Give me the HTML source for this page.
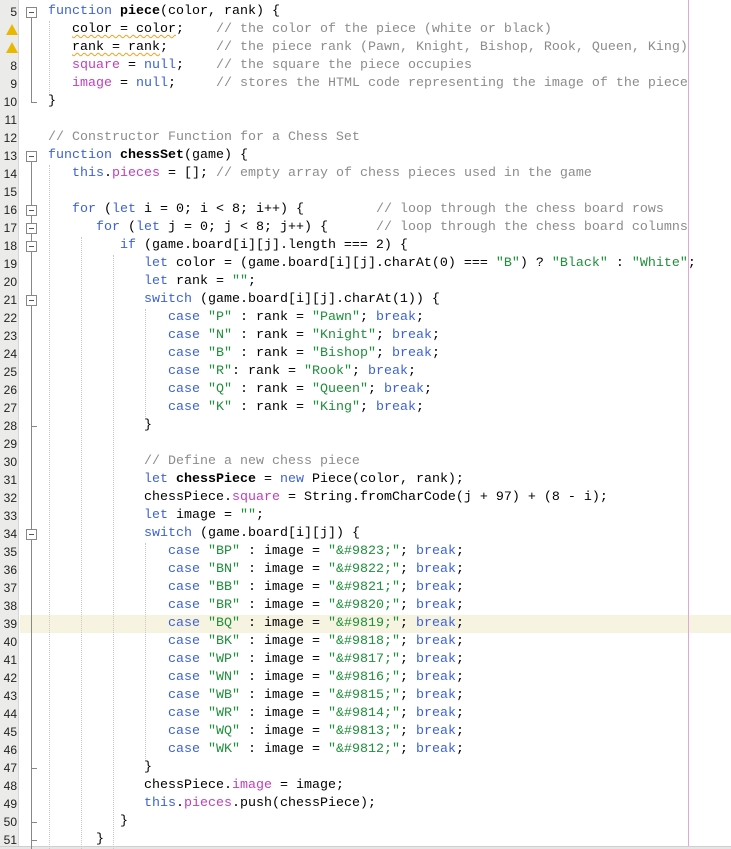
<!DOCTYPE html>
<html><head><meta charset="utf-8"><style>
*{margin:0;padding:0;box-sizing:border-box}
body{width:731px;height:849px;background:#fff;position:relative;overflow:hidden;font-family:"Liberation Mono",monospace;font-size:13.33px}
#gut{position:absolute;left:0;top:0;width:19px;height:849px;background:#ebebea;border-right:1px solid #d6d6d6}
.ln{position:absolute;left:0;width:17px;text-align:right;color:#222;font-family:"Liberation Sans",sans-serif;font-size:12px;height:18px;line-height:18px}
.cl{position:absolute;left:48px;height:18px;line-height:18px;white-space:pre;color:#000}
.k{color:#3d62d8}.s{color:#1f8f3a}.c{color:#8c8c8c}.p{color:#c03fc0}.b{font-weight:bold}
.w{text-decoration:underline wavy #f0a020;text-decoration-thickness:1px;text-underline-offset:2px}
.fb{position:absolute;left:26px;width:11px;height:11px;border:1px solid #888;background:#fff}
.fb:after{content:"";position:absolute;left:2px;top:4px;width:5px;height:1px;background:#555}
.fv{position:absolute;left:31px;width:1px;background:#888}
.fe{position:absolute;left:31px;width:6px;height:1px;background:#888}
.g{position:absolute;width:0;border-left:1px dotted #c8c8c8}
.warn{position:absolute;left:6px;width:0;height:0;border-left:6px solid transparent;border-right:6px solid transparent;border-bottom:11px solid #e8b800}
</style></head><body>
<div style="position:absolute;left:20px;top:615px;width:711px;height:18px;background:#f6f3e1"></div>
<div style="position:absolute;left:688px;top:0;width:1px;height:849px;background:#e0a8d8"></div>
<div id="gut"></div>
<div style="position:absolute;left:0;top:846px;width:731px;height:3px;background:#e6e6e6;border-top:1px solid #cfcfcf"></div>

<div class="g" style="left:49px;top:21px;height:72px"></div>
<div class="g" style="left:49px;top:165px;height:684px"></div>
<div class="g" style="left:81px;top:237px;height:612px"></div>
<div class="g" style="left:113px;top:255px;height:594px"></div>
<div class="g" style="left:145px;top:309px;height:108px"></div>
<div class="g" style="left:145px;top:543px;height:216px"></div>

<div class="fv" style="top:12px;height:90px"></div><div class="fe" style="top:102px"></div>
<div class="fv" style="top:156px;height:693px"></div>
<div class="fe" style="top:426px"></div><div class="fe" style="top:768px"></div><div class="fe" style="top:822px"></div><div class="fe" style="top:840px"></div>
<div class="fb" style="top:7px"></div>
<div class="fb" style="top:151px"></div>
<div class="fb" style="top:205px"></div>
<div class="fb" style="top:223px"></div>
<div class="fb" style="top:241px"></div>
<div class="fb" style="top:295px"></div>
<div class="fb" style="top:529px"></div>

<div class="ln" style="top:3px">5</div>
<div class="warn" style="top:24px"></div>
<div class="warn" style="top:42px"></div>
<div class="ln" style="top:57px">8</div>
<div class="ln" style="top:75px">9</div>
<div class="ln" style="top:93px">10</div>
<div class="ln" style="top:111px">11</div>
<div class="ln" style="top:129px">12</div>
<div class="ln" style="top:147px">13</div>
<div class="ln" style="top:165px">14</div>
<div class="ln" style="top:183px">15</div>
<div class="ln" style="top:201px">16</div>
<div class="ln" style="top:219px">17</div>
<div class="ln" style="top:237px">18</div>
<div class="ln" style="top:255px">19</div>
<div class="ln" style="top:273px">20</div>
<div class="ln" style="top:291px">21</div>
<div class="ln" style="top:309px">22</div>
<div class="ln" style="top:327px">23</div>
<div class="ln" style="top:345px">24</div>
<div class="ln" style="top:363px">25</div>
<div class="ln" style="top:381px">26</div>
<div class="ln" style="top:399px">27</div>
<div class="ln" style="top:417px">28</div>
<div class="ln" style="top:435px">29</div>
<div class="ln" style="top:453px">30</div>
<div class="ln" style="top:471px">31</div>
<div class="ln" style="top:489px">32</div>
<div class="ln" style="top:507px">33</div>
<div class="ln" style="top:525px">34</div>
<div class="ln" style="top:543px">35</div>
<div class="ln" style="top:561px">36</div>
<div class="ln" style="top:579px">37</div>
<div class="ln" style="top:597px">38</div>
<div class="ln" style="top:615px">39</div>
<div class="ln" style="top:633px">40</div>
<div class="ln" style="top:651px">41</div>
<div class="ln" style="top:669px">42</div>
<div class="ln" style="top:687px">43</div>
<div class="ln" style="top:705px">44</div>
<div class="ln" style="top:723px">45</div>
<div class="ln" style="top:741px">46</div>
<div class="ln" style="top:759px">47</div>
<div class="ln" style="top:777px">48</div>
<div class="ln" style="top:795px">49</div>
<div class="ln" style="top:813px">50</div>
<div class="ln" style="top:831px">51</div>

<div class="cl" style="top:3px"><span class="k">function</span> <span class="b">piece</span>(color, rank) {</div>
<div class="cl" style="top:21px">   <span class="w">color = color</span>;    <span class="c">// the color of the piece (white or black)</span></div>
<div class="cl" style="top:39px">   <span class="w">rank = rank</span>;      <span class="c">// the piece rank (Pawn, Knight, Bishop, Rook, Queen, King)</span></div>
<div class="cl" style="top:57px">   <span class="p">square</span> = <span class="k">null</span>;    <span class="c">// the square the piece occupies</span></div>
<div class="cl" style="top:75px">   <span class="p">image</span> = <span class="k">null</span>;     <span class="c">// stores the HTML code representing the image of the piece</span></div>
<div class="cl" style="top:93px">}</div>
<div class="cl" style="top:129px"><span class="c">// Constructor Function for a Chess Set</span></div>
<div class="cl" style="top:147px"><span class="k">function</span> <span class="b">chessSet</span>(game) {</div>
<div class="cl" style="top:165px">   <span class="k">this</span>.<span class="p">pieces</span> = []; <span class="c">// empty array of chess pieces used in the game</span></div>
<div class="cl" style="top:201px">   <span class="k">for</span> (<span class="k">let</span> i = 0; i &lt; 8; i++) {         <span class="c">// loop through the chess board rows</span></div>
<div class="cl" style="top:219px">      <span class="k">for</span> (<span class="k">let</span> j = 0; j &lt; 8; j++) {      <span class="c">// loop through the chess board columns</span></div>
<div class="cl" style="top:237px">         <span class="k">if</span> (game.board[i][j].length === 2) {</div>
<div class="cl" style="top:255px">            <span class="k">let</span> color = (game.board[i][j].charAt(0) === <span class="s">"B"</span>) ? <span class="s">"Black"</span> : <span class="s">"White"</span>;</div>
<div class="cl" style="top:273px">            <span class="k">let</span> rank = <span class="s">""</span>;</div>
<div class="cl" style="top:291px">            <span class="k">switch</span> (game.board[i][j].charAt(1)) {</div>
<div class="cl" style="top:309px">               <span class="k">case</span> <span class="s">"P"</span> : rank = <span class="s">"Pawn"</span>; <span class="k">break</span>;</div>
<div class="cl" style="top:327px">               <span class="k">case</span> <span class="s">"N"</span> : rank = <span class="s">"Knight"</span>; <span class="k">break</span>;</div>
<div class="cl" style="top:345px">               <span class="k">case</span> <span class="s">"B"</span> : rank = <span class="s">"Bishop"</span>; <span class="k">break</span>;</div>
<div class="cl" style="top:363px">               <span class="k">case</span> <span class="s">"R"</span>: rank = <span class="s">"Rook"</span>; <span class="k">break</span>;</div>
<div class="cl" style="top:381px">               <span class="k">case</span> <span class="s">"Q"</span> : rank = <span class="s">"Queen"</span>; <span class="k">break</span>;</div>
<div class="cl" style="top:399px">               <span class="k">case</span> <span class="s">"K"</span> : rank = <span class="s">"King"</span>; <span class="k">break</span>;</div>
<div class="cl" style="top:417px">            }</div>
<div class="cl" style="top:453px">            <span class="c">// Define a new chess piece</span></div>
<div class="cl" style="top:471px">            <span class="k">let</span> <span class="b">chessPiece</span> = <span class="k">new</span> Piece(color, rank);</div>
<div class="cl" style="top:489px">            chessPiece.<span class="p">square</span> = String.fromCharCode(j + 97) + (8 - i);</div>
<div class="cl" style="top:507px">            <span class="k">let</span> image = <span class="s">""</span>;</div>
<div class="cl" style="top:525px">            <span class="k">switch</span> (game.board[i][j]) {</div>
<div class="cl" style="top:543px">               <span class="k">case</span> <span class="s">"BP"</span> : image = <span class="s">"&amp;#9823;"</span>; <span class="k">break</span>;</div>
<div class="cl" style="top:561px">               <span class="k">case</span> <span class="s">"BN"</span> : image = <span class="s">"&amp;#9822;"</span>; <span class="k">break</span>;</div>
<div class="cl" style="top:579px">               <span class="k">case</span> <span class="s">"BB"</span> : image = <span class="s">"&amp;#9821;"</span>; <span class="k">break</span>;</div>
<div class="cl" style="top:597px">               <span class="k">case</span> <span class="s">"BR"</span> : image = <span class="s">"&amp;#9820;"</span>; <span class="k">break</span>;</div>
<div class="cl" style="top:615px">               <span class="k">case</span> <span class="s">"BQ"</span> : image = <span class="s">"&amp;#9819;"</span>; <span class="k">break</span>;</div>
<div class="cl" style="top:633px">               <span class="k">case</span> <span class="s">"BK"</span> : image = <span class="s">"&amp;#9818;"</span>; <span class="k">break</span>;</div>
<div class="cl" style="top:651px">               <span class="k">case</span> <span class="s">"WP"</span> : image = <span class="s">"&amp;#9817;"</span>; <span class="k">break</span>;</div>
<div class="cl" style="top:669px">               <span class="k">case</span> <span class="s">"WN"</span> : image = <span class="s">"&amp;#9816;"</span>; <span class="k">break</span>;</div>
<div class="cl" style="top:687px">               <span class="k">case</span> <span class="s">"WB"</span> : image = <span class="s">"&amp;#9815;"</span>; <span class="k">break</span>;</div>
<div class="cl" style="top:705px">               <span class="k">case</span> <span class="s">"WR"</span> : image = <span class="s">"&amp;#9814;"</span>; <span class="k">break</span>;</div>
<div class="cl" style="top:723px">               <span class="k">case</span> <span class="s">"WQ"</span> : image = <span class="s">"&amp;#9813;"</span>; <span class="k">break</span>;</div>
<div class="cl" style="top:741px">               <span class="k">case</span> <span class="s">"WK"</span> : image = <span class="s">"&amp;#9812;"</span>; <span class="k">break</span>;</div>
<div class="cl" style="top:759px">            }</div>
<div class="cl" style="top:777px">            chessPiece.<span class="p">image</span> = image;</div>
<div class="cl" style="top:795px">            <span class="k">this</span>.<span class="p">pieces</span>.push(chessPiece);</div>
<div class="cl" style="top:813px">         }</div>
<div class="cl" style="top:831px">      }</div>
</body></html>
